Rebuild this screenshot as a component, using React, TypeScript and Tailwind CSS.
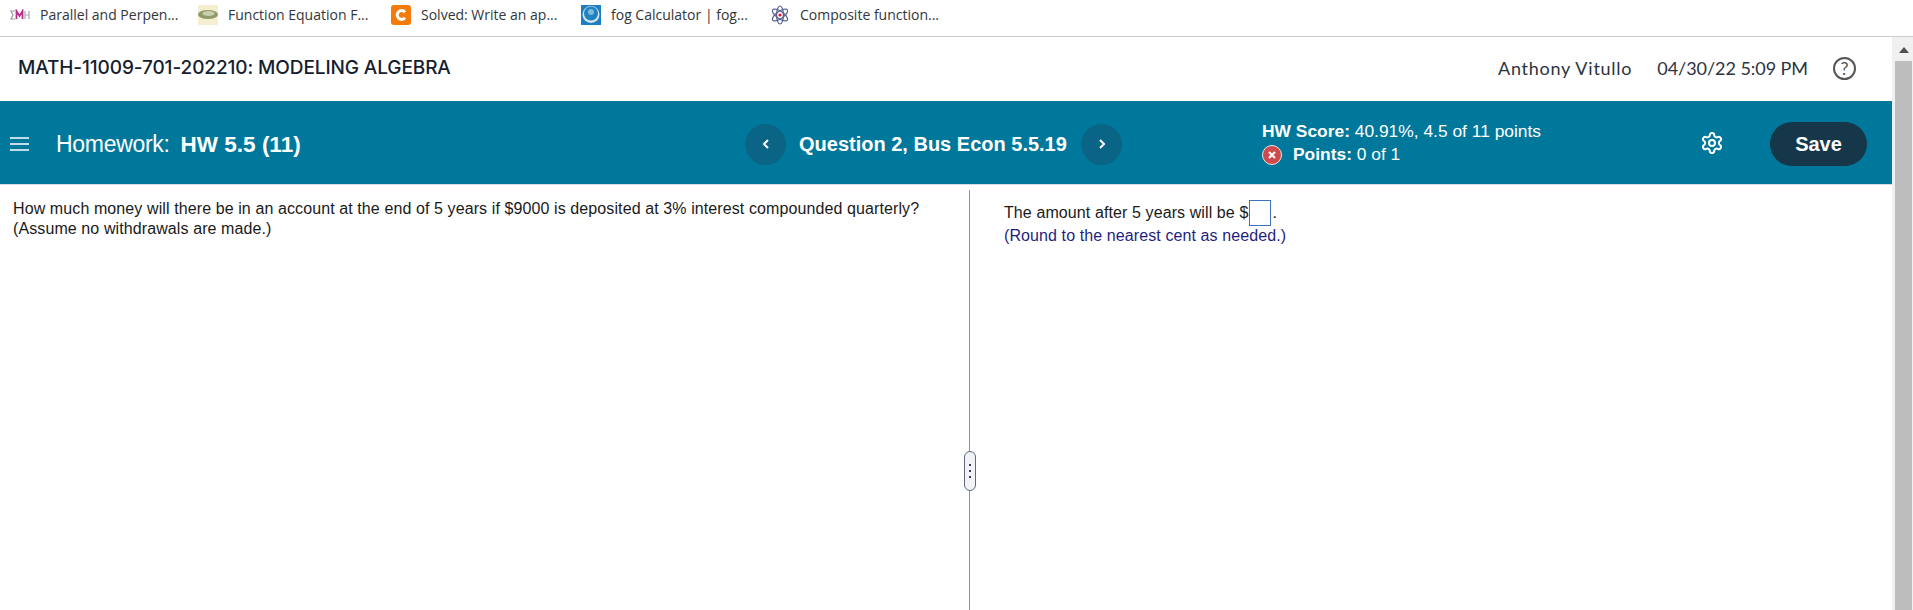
import React from "react";

const Bookmark = ({ icon, label, className }: { icon: React.ReactNode; label: string; className: string }) => (
  <div className={`flex items-center ${className}`}>
    <div className="w-5 h-5 flex items-center justify-center shrink-0">{icon}</div>
    <span className="ml-[10px] text-[14px] text-[#32363a] whitespace-nowrap font-['Open_Sans',sans-serif]">{label}</span>
  </div>
);

export default function App() {
  return (
    <div className="h-[610px] w-[1913px] overflow-hidden bg-white flex flex-col font-['Liberation_Sans',sans-serif]">
      <div className="h-[37px] shrink-0 border-b border-[#cdcdcd] flex items-start pt-[4px] pl-[10px]">
        <Bookmark
          className="w-[188px]"
          label="Parallel and Perpen..."
          icon={
            <svg width="20" height="12" viewBox="0 0 20 12">
              <path d="M5 2H1l2 4-2 4h4" fill="none" stroke="#9a9aa8" strokeWidth="1.2" />
              <path d="M6.5 10V2l3 5 3-5v8" fill="none" stroke="#b5308a" strokeWidth="1.8" />
              <path d="M15 2v8M19 2v8M15 6h4" stroke="#a8a8a8" strokeWidth="1.2" />
            </svg>
          }
        />
        <Bookmark
          className="w-[193px]"
          label="Function Equation F..."
          icon={
            <svg width="20" height="20" viewBox="0 0 20 20">
              <rect width="20" height="20" fill="#f5efcf" />
              <ellipse cx="10" cy="9.5" rx="10" ry="4.5" fill="#8f9a68" />
              <ellipse cx="10.5" cy="8.5" rx="6" ry="2.5" fill="#c9cfae" />
            </svg>
          }
        />
        <Bookmark
          className="w-[190px]"
          label="Solved: Write an ap..."
          icon={
            <svg width="20" height="20" viewBox="0 0 20 20">
              <rect width="20" height="20" rx="3" fill="#f47b0a" />
              <path d="M14 7.2A4.4 4.4 0 1 0 14 12.8" fill="none" stroke="#fff" strokeWidth="3" />
            </svg>
          }
        />
        <Bookmark
          className="w-[189px]"
          label="fog Calculator | fog..."
          icon={
            <svg width="20" height="20" viewBox="0 0 20 20">
              <rect width="20" height="20" fill="#1c7fc4" />
              <circle cx="10" cy="9.5" r="8.5" fill="#d4e2ea" />
              <circle cx="10" cy="8.5" r="7" fill="#1f83bf" />
              <circle cx="10" cy="7" r="3" fill="#7dbbdc" />
            </svg>
          }
        />
        <Bookmark
          className="w-[200px]"
          label="Composite function..."
          icon={
            <svg width="20" height="20" viewBox="0 0 20 20" fill="none" stroke="#56608f" strokeWidth="1.2">
              <ellipse cx="10" cy="10" rx="9" ry="3.6" transform="rotate(35 10 10)" />
              <ellipse cx="10" cy="10" rx="9" ry="3.6" transform="rotate(-35 10 10)" />
              <ellipse cx="10" cy="10" rx="3.4" ry="9" />
              <circle cx="10" cy="10" r="1.6" fill="#e5112a" stroke="none" />
            </svg>
          }
        />
      </div>

      <div className="flex-1 flex min-h-0">
        <div className="flex-1 min-w-0 flex flex-col">
          <div className="h-[64px] shrink-0 flex items-center pb-[2px] pl-[18px] pr-[36px] text-[#14202e]">
            <div className="text-[19px] font-medium font-['Inter',sans-serif] tracking-[-0.1px]">MATH-11009-701-202210: MODELING ALGEBRA</div>
            <div className="ml-auto text-[18px] font-['Lato',sans-serif] text-[#2b3440] tracking-[0.75px]">Anthony Vitullo</div>
            <div className="ml-[25px] text-[18px] font-['Lato',sans-serif] text-[#2b3440] tracking-[-0.05px]">04/30/22 5:09 PM</div>
            <div className="ml-[25px] w-[23px] h-[23px] rounded-full border-2 border-[#555] flex items-center justify-center text-[18px] text-[#555] font-['Lato',sans-serif]">?</div>
          </div>

          <div className="h-[83px] shrink-0 bg-[#00789c] flex items-center pt-[3px] text-white">
            <svg className="ml-[10px] shrink-0" width="19" height="16" viewBox="0 0 19 16" stroke="#fff" strokeWidth="1.6">
              <path d="M0 2h19M0 8h19M0 14h19" />
            </svg>
            <div className="ml-[27px] w-[689px] text-[23px] tracking-[-0.3px] whitespace-nowrap">
              Homework:
              <span className="font-bold ml-[11px] tracking-normal text-[22.5px]">HW 5.5 (11)</span>
            </div>
            <div className="w-[41px] h-[41px] rounded-full bg-[#0a6486] flex items-center justify-center shrink-0">
              <svg width="8" height="10" viewBox="0 0 8 10" fill="none" stroke="#fff" strokeWidth="2"><path d="M6 1 2 5l4 4" /></svg>
            </div>
            <div className="ml-[13px] text-[20px] font-bold whitespace-nowrap w-[282px]">Question 2, Bus Econ 5.5.19</div>
            <div className="w-[41px] h-[41px] rounded-full bg-[#0a6486] flex items-center justify-center shrink-0">
              <svg width="8" height="10" viewBox="0 0 8 10" fill="none" stroke="#fff" strokeWidth="2"><path d="M2 1l4 4-4 4" /></svg>
            </div>
            <div className="ml-[140px] w-[438px] text-[17.4px] leading-[23px] mt-[-2px]">
              <div><span className="font-bold">HW Score:</span> 40.91%, 4.5 of 11 points</div>
              <div className="flex items-center">
                <span className="w-[20px] h-[20px] rounded-full bg-[#cf4a4a] border border-[#e8e8e8] flex items-center justify-center">
                  <svg width="10" height="10" viewBox="0 0 10 10" stroke="#fff" strokeWidth="2"><path d="M2 2l6 6M8 2 2 8" /></svg>
                </span>
                <span className="ml-[11px]"><span className="font-bold">Points:</span> 0 of 1</span>
              </div>
            </div>
            <svg className="shrink-0 mt-[-3px]" width="24" height="24" viewBox="0 0 24 24" fill="none" stroke="#fff" strokeWidth="2" strokeLinecap="round" strokeLinejoin="round">
              <path d="M12.22 2h-.44a2 2 0 0 0-2 2v.18a2 2 0 0 1-1 1.73l-.43.25a2 2 0 0 1-2 0l-.15-.08a2 2 0 0 0-2.73.73l-.22.38a2 2 0 0 0 .73 2.73l.15.1a2 2 0 0 1 1 1.72v.51a2 2 0 0 1-1 1.74l-.15.09a2 2 0 0 0-.73 2.73l.22.38a2 2 0 0 0 2.73.73l.15-.08a2 2 0 0 1 2 0l.43.25a2 2 0 0 1 1 1.73V20a2 2 0 0 0 2 2h.44a2 2 0 0 0 2-2v-.18a2 2 0 0 1 1-1.73l.43-.25a2 2 0 0 1 2 0l.15.08a2 2 0 0 0 2.73-.73l.22-.39a2 2 0 0 0-.73-2.73l-.15-.08a2 2 0 0 1-1-1.74v-.5a2 2 0 0 1 1-1.74l.15-.09a2 2 0 0 0 .73-2.73l-.22-.38a2 2 0 0 0-2.73-.73l-.15.08a2 2 0 0 1-2 0l-.43-.25a2 2 0 0 1-1-1.73V4a2 2 0 0 0-2-2z" />
              <circle cx="12" cy="12" r="3" />
            </svg>
            <div className="ml-[46px] w-[97px] h-[44px] rounded-full bg-[#16364a] flex items-center justify-center text-[20px] font-bold shrink-0">Save</div>
          </div>

          <div className="h-px shrink-0 bg-[#d5dbe3]" />

          <div className="flex-1 flex min-h-0 relative">
            <div className="w-[969px] shrink-0 pl-[13px] pr-[20px] pt-[14px] text-[16px] leading-[20px] text-[#1a1a1a] tracking-[0.1px]">
              How much money will there be in an account at the end of 5 years if $9000 is deposited at 3% interest compounded quarterly?
              <br />
              (Assume no withdrawals are made.)
            </div>
            <div className="w-px shrink-0 mt-[5px] bg-[#8c939c]" />
            <div className="pl-[34px] pt-[14px] text-[16px] tracking-[0.1px]">
              <div className="flex items-center h-[28px] text-[#1a1a1a]">
                The amount after 5 years will be $
                <span className="ml-[1px] w-[22px] h-[26px] border border-[#3b72c4] inline-block" />
                <span className="ml-[1px]">.</span>
              </div>
              <div className="text-[#1f1f80] leading-[20px] mt-[-1px]">(Round to the nearest cent as needed.)</div>
            </div>
            <div className="absolute left-[964px] top-[266px] w-[12px] h-[40px] rounded-full border border-[#5c6a7c] bg-[#f2f3f6] flex flex-col items-center justify-center gap-[4px]">
              <span className="w-[2px] h-[2px] bg-[#3b3b55]" />
              <span className="w-[2px] h-[2px] bg-[#3b3b55]" />
              <span className="w-[2px] h-[2px] bg-[#3b3b55]" />
            </div>
          </div>
        </div>

        <div className="w-[21px] shrink-0 bg-[#f0f0f0] flex flex-col items-center pl-[2px]">
          <svg className="mt-[10px]" width="10" height="6" viewBox="0 0 10 6"><path d="M5 0l5 6H0z" fill="#505050" /></svg>
          <div className="mt-[8px] w-[17px] flex-1 bg-[#bdbdbd]" />
        </div>
      </div>
    </div>
  );
}
